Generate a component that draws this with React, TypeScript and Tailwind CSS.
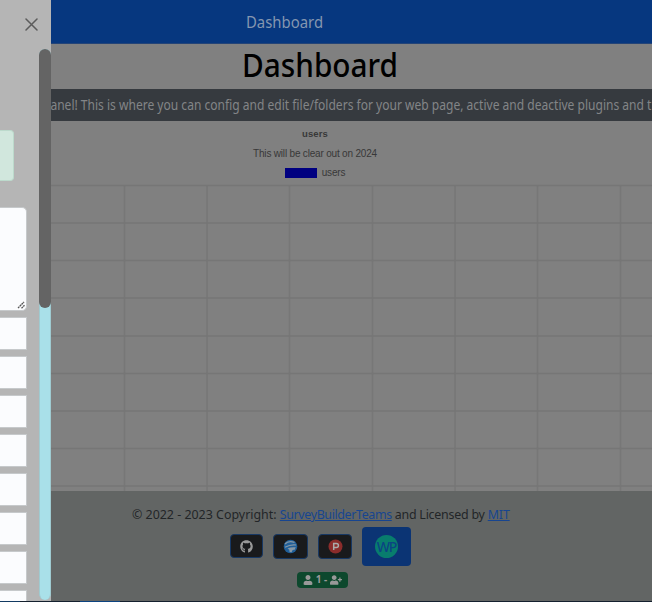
import { FaGithub, FaUser, FaUserPlus } from "react-icons/fa";

const columns = [124.5, 207, 289.5, 372.5, 455, 537.5, 620.5];
const rows = [185.5, 223, 260.5, 298, 336, 373.5, 411, 448.5, 486];

function Chart() {
  return (
    <section className="relative h-[370px] bg-[#808080] font-['Liberation_Sans',sans-serif] text-[10px] text-[#383838]">
      <svg className="absolute inset-0" width="652" height="370" viewBox="0 121 652 370">
        {columns.map((x) => (
          <path key={x} d={`M${x} 185V491`} stroke="#777" strokeWidth="1.6" />
        ))}
        {rows.map((y) => (
          <path key={y} d={`M0 ${y}H652`} stroke="#767676" strokeWidth="1.5" />
        ))}
      </svg>
      <div className="relative flex w-[630px] flex-col items-center">
        <div className="mt-[5px] h-[15px] text-[9.5px] leading-[15px] font-bold tracking-[0.1px]">users</div>
        <div className="mt-[5px] h-[15px] leading-[15px] tracking-[-0.19px]">This will be clear out on 2024</div>
        <div className="mt-1 flex h-[15px] items-center gap-[5px] leading-[15px] tracking-[-0.15px]">
          <span className="h-[10px] w-8 bg-[#000080]" />
          <span>users</span>
        </div>
      </div>
    </section>
  );
}

function Footer() {
  return (
    <footer className="h-[109.5px] bg-[#626564] pt-[13px] text-[#222528]">
      <p className="ml-[132px] w-max origin-left scale-x-[0.955] whitespace-nowrap text-[13px] leading-5">
        © 2022 - 2023 Copyright:{" "}
        <a className="tracking-[-0.38px] text-[#174590] underline">SurveyBuilderTeams</a>
        <span className="tracking-[-0.24px]"> and Licensed by </span>
        <a className="tracking-[-0.15px] text-[#174590] underline">MIT</a>
      </p>
      <div className="mt-[2px] ml-[230px] flex h-10 items-center">
        <span className="flex h-6 w-[33px] items-center justify-center rounded-[4px] border border-[#173864] bg-[#191a1c]">
          <FaGithub className="text-[13px] text-[#999]" />
        </span>
        <span className="ml-[10px] flex h-[25px] w-[35px] items-center justify-center rounded-[4px] border border-[#173864] bg-[#191a1c]">
          <svg width="15" height="15" viewBox="0 0 15 15">
            <circle cx="7.5" cy="7.5" r="6.8" fill="#205f99" />
            <path d="M2 5Q5 1.5 11.5 3.3M2 8.3Q7.5 5.2 13 6" fill="none" stroke="#8798a5" strokeWidth="1.2" />
            <path d="M4.5 9.6Q8 7.7 12.8 8.3L11.4 11Q9.5 10 8.6 13.2L6.6 13Q7 10.5 4.5 9.6Z" fill="#8798a5" />
          </svg>
        </span>
        <span className="ml-[10px] flex h-[25px] w-[34px] items-center justify-center rounded-[4px] border border-[#173864] bg-[#191a1c]">
          <svg width="15" height="15" viewBox="0 0 15 15">
            <circle cx="7.5" cy="7.5" r="7" fill="#8b2c2b" />
            <path d="M5.7 11V4.6H8.4A1.9 1.9 0 0 1 8.4 8.6H5.7" fill="none" stroke="#aaa" strokeWidth="1.5" />
          </svg>
        </span>
        <span className="ml-[10px] flex h-[39px] w-[49px] items-center justify-center rounded-[4px] bg-[#0b3474]">
          <span className="flex size-[23px] items-center justify-center rounded-full bg-[#087d6d] text-[14px] font-medium tracking-[-1px] text-[#0b4483]">
            WP
          </span>
        </span>
      </div>
      <div className="mt-[5.5px] ml-[297px] flex h-[16.5px] w-[51px] items-center justify-center gap-[3px] rounded-[4px] bg-[#0d482d] text-[10px] font-bold text-[#999]">
        <FaUser className="text-[10px]" />
        <span className="whitespace-nowrap">1 -</span>
        <FaUserPlus className="text-[12px]" />
      </div>
    </footer>
  );
}

function Drawer() {
  return (
    <aside className="absolute top-0 left-0 flex h-[601px] w-[51px] overflow-hidden bg-[#b5b5b5]">
      <div className="w-[27px] shrink-0">
        <div className="mt-[130px] h-[51px] w-[13.5px] rounded-r-[4px] border border-l-0 border-[#bcdacc] bg-[#d1e7dd]" />
        <div className="mt-[26px] flex h-[104px] items-end justify-end rounded-r-[5px] border border-l-0 border-[#c6c9cb] bg-[#fbfcfe]">
          <svg width="9" height="9" viewBox="0 0 9 9" stroke="#555" strokeWidth="1.3">
            <path d="M1 7L7 1M4.5 7.3L7.5 4.3" strokeDasharray="2 .5" />
          </svg>
        </div>
        <div className="mt-[6px] flex flex-col gap-[6px]">
          {[1, 2, 3, 4, 5, 6, 7, 8].map((field) => (
            <div key={field} className="h-[33px] shrink-0 border border-l-0 border-[#c6c9cb] bg-[#fbfcfe]" />
          ))}
        </div>
      </div>
      <div className="ml-3 h-[550px] w-3 pt-[49px]">
        <div className="h-[551px] w-3 rounded-[6px] border-x border-[#9fcbd1] bg-[#a9e0e9]">
          <div className="-mx-px h-[259px] rounded-[6px] bg-[#646464]" />
        </div>
      </div>
      <svg className="absolute top-[18px] left-[25px]" width="13" height="13" viewBox="0 0 13 13">
        <path d="M1 1L12 12M12 1L1 12" stroke="#5b5b5b" strokeWidth="1.5" strokeLinecap="round" />
      </svg>
    </aside>
  );
}

export default function App() {
  return (
    <main className="relative h-[602px] w-[652px] overflow-hidden bg-[#808080] font-['Noto_Sans',sans-serif]">
      <header className="h-11 border-b border-[#244477] bg-[#06377f] pl-[245.5px] text-[16px] leading-[45px] text-[#8496b0]">
        <div className="w-max origin-left scale-x-[0.93]">Dashboard</div>
      </header>
      <h1 className="h-[45px] pl-[242px] text-[32px] leading-[41px] font-medium text-black">
        <div className="w-max origin-left scale-x-[0.93]">Dashboard</div>
      </h1>
      <div className="flex h-8 items-center overflow-hidden bg-[#363a3f] pt-px pl-[43px] text-[13.5px] whitespace-nowrap text-[#838587]">
        <div className="w-max shrink-0 origin-left scale-x-[0.892]">
          panel! This is where you can config and edit file/folders for your web page, active and deactive plugins and t
        </div>
      </div>
      <Chart />
      <Footer />
      <div className="flex h-[2px] bg-[#14202e]">
        <span className="w-5 bg-[#123a62]" />
        <span className="ml-[60px] w-10 bg-[#0c4380]" />
      </div>
      <Drawer />
    </main>
  );
}
